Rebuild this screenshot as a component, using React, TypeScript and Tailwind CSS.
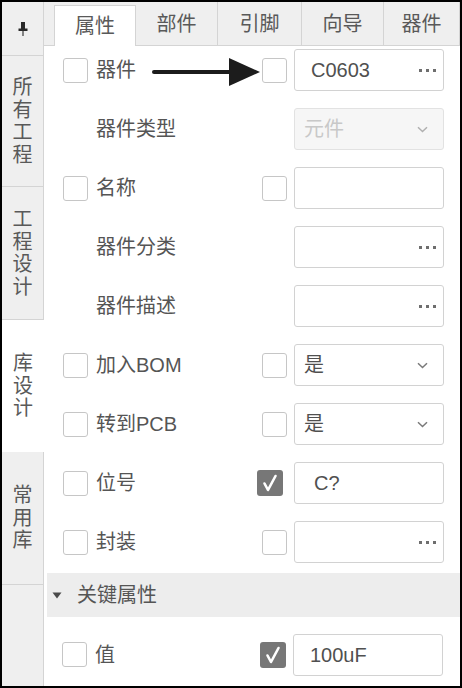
import React from 'react';

const FONT = { fontFamily: '"Liberation Sans", "Noto Sans CJK SC", sans-serif' };

type Field =
  | { kind: 'text'; value?: string; dots?: boolean; pad?: string }
  | { kind: 'select'; value: string; disabled?: boolean };

type Row = {
  label: string;
  check?: boolean;
  checked?: boolean;
  field: Field;
};

const rows: Row[] = [
  { label: '器件', check: true, field: { kind: 'text', value: 'C0603', dots: true } },
  { label: '器件类型', field: { kind: 'select', value: '元件', disabled: true } },
  { label: '名称', check: true, field: { kind: 'text' } },
  { label: '器件分类', field: { kind: 'text', dots: true } },
  { label: '器件描述', field: { kind: 'text', dots: true } },
  { label: '加入BOM', check: true, field: { kind: 'select', value: '是' } },
  { label: '转到PCB', check: true, field: { kind: 'select', value: '是' } },
  { label: '位号', check: true, checked: true, field: { kind: 'text', value: 'C?', pad: 'pl-[19px]' } },
  { label: '封装', check: true, field: { kind: 'text', dots: true } },
];

function Box({ checked }: { checked?: boolean }) {
  if (checked) {
    return (
      <div className="flex h-[26px] w-[26px] shrink-0 items-center justify-center rounded-[3px] bg-[#777777]">
        <svg width="26" height="26" viewBox="0 0 26 26">
          <path d="M7.5 13.5 L11 20 L18.5 6" fill="none" stroke="#ffffff" strokeWidth="2.6" strokeLinecap="round" strokeLinejoin="round" />
        </svg>
      </div>
    );
  }
  return <div className="h-[25px] w-[25px] shrink-0 rounded-[3px] border border-[#c6c6c6] bg-white" />;
}

function Dots() {
  return (
    <div className="ml-auto mr-[7px] flex gap-[4px]">
      <div className="h-[3px] w-[3px] bg-[#6e6e6e]" />
      <div className="h-[3px] w-[3px] bg-[#6e6e6e]" />
      <div className="h-[3px] w-[3px] bg-[#6e6e6e]" />
    </div>
  );
}

function Chevron({ color }: { color: string }) {
  return (
    <svg className="ml-auto mr-[15px]" width="11" height="7" viewBox="0 0 11 7">
      <path d="M1 1.2 L5.5 5.5 L10 1.2" fill="none" stroke={color} strokeWidth="1.5" />
    </svg>
  );
}

function FieldBox({ field }: { field: Field }) {
  if (field.kind === 'select') {
    return (
      <div
        className={`flex h-[42px] w-[150px] shrink-0 items-center rounded-[3px] border pl-[9px] text-[20px] ${
          field.disabled ? 'border-[#e2e2e2] bg-[#f6f6f6] text-[#c8c8c8]' : 'border-[#d2d2d2] bg-white text-[#505050]'
        }`}
      >
        <span>{field.value}</span>
        <Chevron color={field.disabled ? '#b0b0b0' : '#7a7a7a'} />
      </div>
    );
  }
  return (
    <div
      className={`flex h-[42px] w-[150px] shrink-0 items-center rounded-[3px] border border-[#d2d2d2] bg-white text-[20px] text-[#505050] ${
        field.pad ?? 'pl-[16px]'
      }`}
    >
      {field.value && <span>{field.value}</span>}
      {field.dots && <Dots />}
    </div>
  );
}

function PropRow({ row }: { row: Row }) {
  return (
    <div className="flex h-[42px] items-center pl-[19px] pr-[16px]">
      {row.check ? <Box /> : <div className="w-[25px] shrink-0" />}
      <span className="ml-[8px] flex-1 text-[20px] text-[#555555]">{row.label}</span>
      {row.check ? (
        <div className={`flex shrink-0 ${row.checked ? '-ml-[6px] mr-[4px]' : ''}`}>
          <Box checked={row.checked} />
        </div>
      ) : (
        <div className="w-[25px] shrink-0" />
      )}
      <div className="ml-[7px] flex shrink-0">
        <FieldBox field={row.field} />
      </div>
    </div>
  );
}

function SideTab({ text, h, active }: { text: string; h: string; active?: boolean }) {
  return (
    <div
      className={`flex ${h} flex-col items-center justify-center text-[20px] leading-[22.5px] text-[#595959] ${
        active ? 'bg-white' : 'border-b border-r border-[#d4d4d4] bg-[#efefef]'
      }`}
    >
      {text.split('').map((c, i) => (
        <span key={i}>{c}</span>
      ))}
    </div>
  );
}

const tabs = [
  { name: '属性', w: 'w-[82px]', active: true },
  { name: '部件', w: 'w-[82px]' },
  { name: '引脚', w: 'w-[84px]' },
  { name: '向导', w: 'w-[82px]' },
  { name: '器件', w: 'w-[76px]' },
];

export default function App() {
  return (
    <div className="relative flex h-[688px] w-[462px] overflow-hidden border-2 border-black bg-white" style={FONT}>
      {/* left dock */}
      <div className="flex w-[42px] shrink-0 flex-col">
        <div className="flex h-[54px] items-center justify-center border-b border-r border-[#d4d4d4] bg-[#efefef]">
          <svg width="12" height="16" viewBox="0 0 12 16">
            <rect x="4" y="1" width="4" height="7" fill="#2a2a2a" />
            <rect x="1.5" y="7.5" width="9" height="2.5" fill="#2a2a2a" />
            <rect x="5.3" y="10" width="1.4" height="5" fill="#555555" />
          </svg>
        </div>
        <SideTab text="所有工程" h="h-[131px]" />
        <SideTab text="工程设计" h="h-[133px]" />
        <SideTab text="库设计" h="h-[132px]" active />
        <SideTab text="常用库" h="h-[133px]" />
        <div className="flex-1 border-r border-[#d4d4d4] bg-[#efefef]" />
      </div>

      {/* main */}
      <div className="flex flex-1 flex-col">
        <div className="flex h-[44px] shrink-0 bg-[#efefef]">
          <div className="w-[10px] shrink-0 border-b border-[#d4d4d4]" />
          {tabs.map((t) =>
            t.active ? (
              <div
                key={t.name}
                className={`mt-[3px] flex ${t.w} shrink-0 items-center justify-center border-x border-t border-[#d4d4d4] bg-white text-[20px] text-[#595959]`}
              >
                {t.name}
              </div>
            ) : (
              <div
                key={t.name}
                className={`flex ${t.w} shrink-0 items-center justify-center border-b border-r border-[#d4d4d4] text-[20px] text-[#595959]`}
              >
                {t.name}
              </div>
            )
          )}
        </div>

        <div className="flex flex-col gap-[17px] pt-[3px]">
          {rows.map((r) => (
            <PropRow key={r.label} row={r} />
          ))}
        </div>

        <div className="ml-[3px] mt-[10px] flex h-[44px] items-center bg-[#ededed] pl-[5px] text-[20px] text-[#555555]">
          <svg width="10" height="7" viewBox="0 0 10 7">
            <path d="M0.5 0.5 L9.5 0.5 L5 6.5 Z" fill="#4a4a4a" />
          </svg>
          <span className="ml-[15px]">关键属性</span>
        </div>

        <div className="mt-[16px] flex h-[43px] items-center pl-[18px] pr-[17px]">
          <Box />
          <span className="ml-[8px] flex-1 text-[20px] text-[#555555]">值</span>
          <div className="mr-[7px] flex shrink-0">
            <Box checked />
          </div>
          <FieldBox field={{ kind: 'text', value: '100uF' }} />
        </div>
      </div>

      {/* annotation arrow */}
      <svg className="pointer-events-none absolute left-[148px] top-[53px]" width="114" height="34" viewBox="0 0 114 34">
        <path d="M4 17 L80 17" stroke="#1c1c1c" strokeWidth="4" strokeLinecap="round" />
        <path d="M79 3 L110 17 L79 31 Z" fill="#1c1c1c" />
      </svg>
    </div>
  );
}
